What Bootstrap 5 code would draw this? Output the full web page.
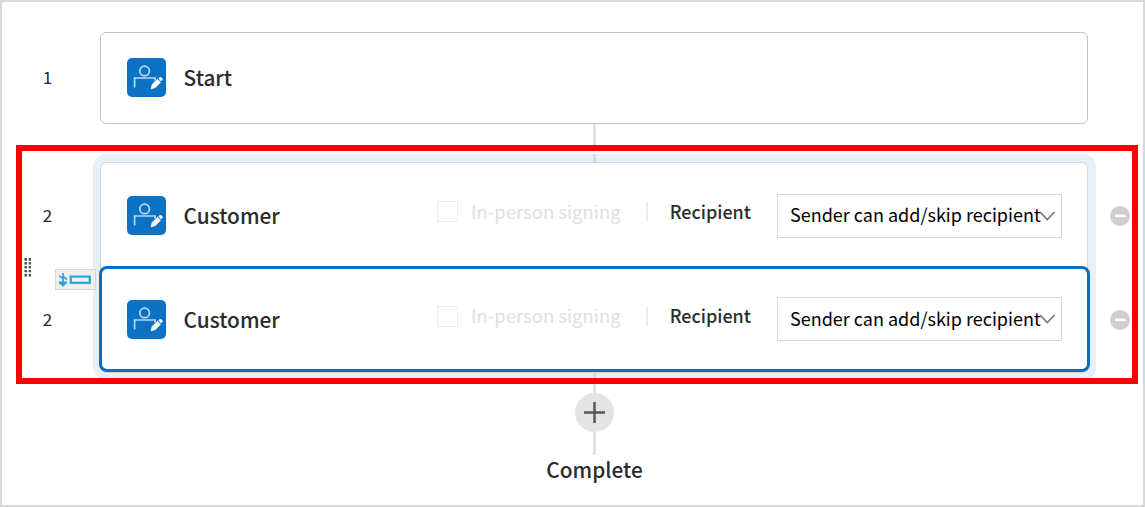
<!DOCTYPE html>
<html lang="en">
<head>
<meta charset="utf-8">
<meta name="viewport" content="width=device-width, initial-scale=1">
<title>Signing workflow</title>
<link href="https://cdn.jsdelivr.net/npm/bootstrap@5.3.0/dist/css/bootstrap.min.css" rel="stylesheet">
<style>
body{font-family:"Noto Sans CJK SC","Noto Sans",sans-serif;color:#2b2b2b;background:#fff}
.frame{width:1145px;height:507px;border:2px solid #d9d9d9;padding:30px 5px 0 14px}
.step-no{font-size:17px;line-height:24px;width:30px;text-align:center}
.start-row{height:92px}
.start-no{width:84px;padding-left:16.5px;padding-bottom:2px}
.step-box{background:#fff;border:1px solid #c3c3c3;border-radius:6px;padding-left:26px}
.start-box{width:988px;height:92px;padding-bottom:1px}
.avatar{width:39px;height:39px;margin-right:17.6px;flex:none}
.step-name{font-size:20.8px;font-weight:500;line-height:30px}
.box-first .step-name,.start-box .step-name{padding-bottom:1px}
.line{width:3px;background:#e2e2e2;margin-left:577px}
.line-a{height:21px}
.group-frame{width:1122px;height:239px;border:6px solid #f00;overflow:hidden}
.left-rail{width:71px;padding-top:52px}
.left-rail .step-no{margin-left:10.5px;height:24px;margin-bottom:80px}
.halo{width:1003px;height:226px;margin-top:3px;padding:8px 8px 0 7px;background:#e6f0f9;border-radius:13px}
.halo-line{width:3px;left:500px;background:#d6dde3}
.box-first{height:107px;border-color:#d3d7da;border-bottom:0;border-radius:6px 6px 0 0;padding-bottom:1px}
.box-second{height:106px;margin:-3px -2px 0 -1px;border:3px solid #0b6dc0;border-radius:8px;padding-left:25px;box-shadow:0 1px 0 #d0d8df}
.in-person{color:#e0e0e0;font-size:18.5px;line-height:26px}
.tick{width:21px;height:21px;border:1px solid #ededed;margin-right:13px;position:relative;top:1px}
.divide{width:2px;height:19px;background:#ececec;margin-left:25px;margin-right:22px;position:relative;top:1px}
.recip{font-size:18px;font-weight:500;line-height:26px}
.picker{width:285px;height:44px;border:1px solid #d9d9d9;border-radius:0;font-size:18px;color:#000;padding:0 0 0 12px;background:#fff;margin-right:25px}
.picker svg{margin-left:-1.5px}
.picker span{margin-bottom:1px}
.box-first .picker span{margin-bottom:2px}
.options{margin-left:auto}
.lift{position:relative;top:-4px;margin-right:2px}
.box-first .lift{top:-4.6px}
.handle{left:1px;top:107px}
.drag-tag{left:33px;top:118px;width:41px;height:21px;background:#efefef;border:1px solid #d6d6d6;z-index:3}
.add-btn{width:39px;height:39px;border-radius:50%;background:#e4e4e4;margin-left:559px;border:0}
.done{font-size:20.8px;font-weight:500;line-height:28px;width:1157px}
.removers{padding:55px 0 0 14px;gap:84px}
</style>
</head>
<body>
<svg class="d-none">
  <symbol id="signer" viewBox="0 0 39 39">
    <rect width="39" height="39" rx="5" fill="#0e72c4"/>
    <g fill="none" stroke="#b9d8f2" stroke-width="1.7"><circle cx="17.6" cy="12.9" r="4.8"/><path d="M7.600 29.500V20h20.500v2.500"/></g>
    <path d="M24.200 30.800l1-4.300 5.300-5.200 3 3-5.200 5.300z" fill="#fff" stroke="#fff" stroke-width=".8"/><path d="M31.300 20.500l1.300-1.200q1-.7 2 .3l.6.6q.9 1 .1 1.900l-1.200 1.200z" fill="#fff"/>
  </symbol>
  <symbol id="minus" viewBox="0 0 20 20"><circle cx="10" cy="10" r="10" fill="#cecece"/><rect x="5" y="8.500" width="10.500" height="2.600" fill="#fff"/></symbol>
</svg>
<main class="frame">
  <div class="start-row d-flex align-items-center">
    <div class="start-no"><div class="step-no">1</div></div>
    <div class="step-box start-box d-flex align-items-center">
      <svg class="avatar"><use href="#signer"/></svg><span class="step-name">Start</span>
    </div>
  </div>
  <div class="line line-a"></div>
  <section class="group-frame d-flex">
    <div class="left-rail position-relative">
      <div class="step-no">2</div>
      <div class="step-no">2</div>
      <svg class="handle position-absolute" width="10" height="19" fill="#555">
        <path d="M1 0h3v3H1zM5 0h3v3H5zM1 4h3v3H1zM5 4h3v3H5zM1 8h3v3H1zM5 8h3v3H5zM1 12h3v3H1zM5 12h3v3H5zM1 16h3v3H1zM5 16h3v3H5z" transform="translate(.5 0) scale(.94 .97)"/>
        <path d="M0 3.400h10M0 7.300h10M0 11.200h10M0 15.100h10M5 0v19" stroke="#fff" stroke-width="1.2"/>
      </svg>
      <div class="drag-tag position-absolute">
        <svg class="d-block" width="39" height="19" fill="none" stroke="#2ba3da" stroke-width="1.7"><path d="M7 3v9M3.200 5.600l2.600 2.200 2.600-.6 2.500 2.400"/><path d="M2.800 11.500H11v1.500L7 16.800l-4.200-3.800z" fill="#2ba3da" stroke="none"/><rect x="14.800" y="6.600" width="19" height="6.200" stroke-width="2.200"/></svg>
      </div>
    </div>
    <div class="halo position-relative">
      <div class="halo-line position-absolute top-0 h-100"></div>
      <div class="position-relative">
        <div class="step-box box-first d-flex align-items-center">
          <svg class="avatar"><use href="#signer"/></svg><span class="step-name">Customer</span>
          <div class="options d-flex align-items-center">
            <div class="lift d-flex align-items-center"><span class="tick"></span><span class="in-person">In-person signing</span><span class="divide"></span><span class="recip">Recipient</span></div>
            <button class="picker d-flex align-items-center ms-4" type="button"><span class="text-nowrap">Sender can add/skip recipient</span><svg class="flex-shrink-0" width="17" height="12" fill="none" stroke="#777" stroke-width="1.7"><path d="M1 2l7.300 7.500L15.500 2"/></svg></button>
          </div>
        </div>
        <div class="step-box box-second d-flex align-items-center">
          <svg class="avatar"><use href="#signer"/></svg><span class="step-name">Customer</span>
          <div class="options d-flex align-items-center">
            <div class="lift d-flex align-items-center"><span class="tick"></span><span class="in-person">In-person signing</span><span class="divide"></span><span class="recip">Recipient</span></div>
            <button class="picker d-flex align-items-center ms-4" type="button"><span class="text-nowrap">Sender can add/skip recipient</span><svg class="flex-shrink-0" width="17" height="12" fill="none" stroke="#777" stroke-width="1.7"><path d="M1 2l7.300 7.500L15.500 2"/></svg></button>
          </div>
        </div>
      </div>
    </div>
    <div class="removers d-flex flex-column">
      <svg width="20" height="20"><use href="#minus"/></svg>
      <svg width="20" height="20"><use href="#minus"/></svg>
    </div>
  </section>
  <div class="line" style="height:9px"></div>
  <button class="add-btn d-flex align-items-center justify-content-center p-0" type="button" aria-label="Add step"><svg width="21" height="21" stroke="#555" stroke-width="2.4"><path d="M0 10.500h21M10.500 0v21"/></svg></button>
  <div class="line" style="height:23px"></div>
  <div class="done text-center">Complete</div>
</main>
<script src="https://cdn.jsdelivr.net/npm/bootstrap@5.3.0/dist/js/bootstrap.bundle.min.js"></script>
</body>
</html>
